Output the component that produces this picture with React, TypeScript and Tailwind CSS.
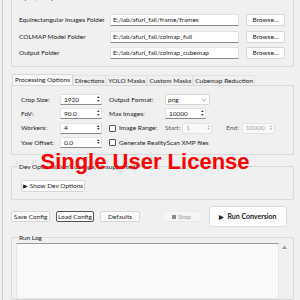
import React from 'react';

const font = { fontFamily: 'Lato, "Liberation Sans", Arial, sans-serif' };

const TextField = ({ value, className = '' }: { value: string; className?: string }) => (
  <div className={`h-[12px] bg-white border border-[#e1e1e1] border-b-[#8a8a8a] rounded-[1px] px-[2px] flex items-center text-[6.5px] text-[#1a1a1a] whitespace-nowrap overflow-hidden ${className}`}>
    {value}
  </div>
);

const Btn = ({ children, className = '' }: { children: React.ReactNode; className?: string }) => (
  <div className={`h-[12px] bg-[#fdfdfd] border border-[#d6d6d6] rounded-[2px] flex items-center justify-center text-[6.5px] text-[#1a1a1a] whitespace-nowrap ${className}`}>
    {children}
  </div>
);

const SpinBox = ({ value, disabled = false, className = '' }: { value: string; disabled?: boolean; className?: string }) => (
  <div className={className}>
    <div className={`h-[11px] border border-[#e3e3e3] ${disabled ? 'bg-[#f9f9f9] text-[#a0a0a0]' : 'bg-white border-b-[#8a8a8a] text-[#1a1a1a]'} rounded-[1px] pl-[3px] pr-[1px] flex items-center justify-between text-[6.5px]`}>
      <span>{value}</span>
      <span className={`flex flex-col items-center leading-none text-[3.5px] ${disabled ? 'text-[#b0b0b0]' : 'text-[#222]'}`}>
        <span>▲</span>
        <span>▼</span>
      </span>
    </div>
  </div>
);

const Check = ({ label }: { label: string }) => (
  <div className="flex items-center gap-[3px] text-[6.5px] text-[#1a1a1a] whitespace-nowrap">
    <div className="w-[7px] h-[7px] border border-[#555] bg-white rounded-[1px]" />
    <span>{label}</span>
  </div>
);

const Group = ({ title, className = '', children }: { title: string; className?: string; children?: React.ReactNode }) => (
  <div className={`relative border border-[#d9d9d9] rounded-[2px] ${className}`}>
    <div className="absolute -top-[5px] left-[6px] bg-[#f0f0f0] px-[1px] text-[6.5px] leading-[9px] text-[#1a1a1a] whitespace-nowrap">{title}</div>
    {children}
  </div>
);

const tabs = ['Processing Options', 'Directions', 'YOLO Masks', 'Custom Masks', 'Cubemap Reduction'];

export default function App() {
  const folders = [
    ['Equirectangular Images Folder', 'E:/lab/afuri_fall/frame/frames'],
    ['COLMAP Model Folder', 'E:/lab/afuri_fall/colmap_full'],
    ['Output Folder', 'E:/lab/afuri_fall/colmap_cubemap'],
  ];

  return (
    <div className="w-[300px] h-[300px] bg-[#f0f0f0] overflow-hidden relative" style={font}>
      <div className="ml-[2px] h-full border-l border-[#c8c8c8] pl-[8px] pr-[6px] flex flex-col">
        {/* Input / Output */}
        <Group title="Input / Output" className="-mt-[3px] h-[70px] shrink-0 pt-[16px] pl-[7px] pr-[7px] flex flex-col gap-[4.5px]">
          {folders.map(([label, value]) => (
            <div key={label} className="flex items-center h-[12px]">
              <span className="w-[91px] text-[6.5px] text-[#1a1a1a] whitespace-nowrap">{label}</span>
              <TextField value={value} className="w-[129px]" />
              <Btn className="ml-[7px] w-[39px]">Browse...</Btn>
            </div>
          ))}
        </Group>

        {/* Tabs */}
        <div className="mt-[7px] flex items-end h-[11px] shrink-0 pl-[1px]">
          {tabs.map((t, i) => (
            <div
              key={t}
              className={`px-[1px] text-[6.5px] text-[#1a1a1a] whitespace-nowrap flex items-center border border-b-0 ${i === 0 ? 'h-[11px] px-[2px] bg-[#f9f9f9] border-[#d9d9d9]' : 'h-[10px] bg-[#f0f0f0] border-[#e3e3e3]'}`}
            >
              {t}
            </div>
          ))}
        </div>
        <div className="h-[70px] shrink-0 border border-[#d9d9d9] bg-[#f0f0f0] pt-[8px] pl-[9px] flex flex-col gap-[3.3px] text-[6.5px] text-[#1a1a1a] whitespace-nowrap">
          <div className="flex items-center h-[11px]">
            <span className="w-[39px]">Crop Size:</span>
            <SpinBox value="1920" className="w-[42px]" />
            <span className="ml-[7px] w-[56px]">Output Format:</span>
            <div className="h-[11px] w-[45px] bg-white border border-[#d6d6d6] rounded-[2px] px-[2px] flex items-center justify-between">
              <span>png</span>
              <svg width="6" height="4" viewBox="0 0 6 4"><path d="M0.5 0.8 L3 3.2 L5.5 0.8" fill="none" stroke="#777" strokeWidth="0.6" /></svg>
            </div>
          </div>
          <div className="flex items-center h-[11px]">
            <span className="w-[39px]">FoV:</span>
            <SpinBox value="90.0" className="w-[42px]" />
            <span className="ml-[7px] w-[56px]">Max Images:</span>
            <SpinBox value="10000" className="w-[41px]" />
          </div>
          <div className="flex items-center h-[11px]">
            <span className="w-[39px]">Workers:</span>
            <SpinBox value="4" className="w-[42px]" />
            <div className="ml-[7px] w-[56px]"><Check label="Image Range:" /></div>
            <span className="text-[#555]">Start:</span>
            <SpinBox value="1" disabled className="ml-[2px] w-[30px]" />
            <span className="ml-[14px] text-[#555]">End:</span>
            <SpinBox value="10000" disabled className="ml-[3px] w-[33px]" />
          </div>
          <div className="flex items-center h-[11px]">
            <span className="w-[39px]">Yaw Offset:</span>
            <SpinBox value="0.0" className="w-[42px]" />
            <div className="ml-[7px]"><Check label="Generate RealityScan XMP files" /></div>
          </div>
        </div>

        {/* Dev options */}
        <Group title="Dev Options(Don't change, Unsupported)" className="mt-[11px] h-[34px] shrink-0 pt-[13px] pl-[9px]">
          <Btn className="w-[64px] gap-[2px]">
            <span className="text-[5.5px]">▶</span> Show Dev Options
          </Btn>
        </Group>

        {/* Buttons */}
        <div className="mt-[6px] h-[21px] shrink-0 flex items-center">
          <Btn className="w-[39px] !h-[11px]">Save Config</Btn>
          <Btn className="ml-[6px] w-[38px] !h-[11px] !border-[#555]">Load Config</Btn>
          <Btn className="ml-[6px] w-[40px] !h-[11px]">Defaults</Btn>
          <div className="ml-[22px] w-[39px] h-[11px] bg-[#f5f5f5] border border-[#ebebeb] rounded-[2px] flex items-center justify-center gap-[2px] text-[6.5px] text-[#9a9a9a]">
            <span className="w-[4px] h-[4px] bg-[#8a8a8a]" />Stop
          </div>
          <div className="ml-[8px] w-[78px] h-[21px] bg-white border border-[#dcdcdc] rounded-[3px] flex items-center justify-center gap-[3px] text-[7px] font-bold text-[#1a1a1a] whitespace-nowrap">
            <span className="text-[6px]">▶</span>Run Conversion
          </div>
        </div>

        {/* Run log */}
        <Group title="Run Log" className="mt-[10px] flex-1 pt-[5px] pl-[4px] pr-[3px] flex">
          <div className="flex-1 bg-[#f9f9f9] border border-[#e5e5e5] border-t-[#9a9a9a] border-t-[1.5px]" />
          <div className="w-[11px] flex justify-center pt-[2px]">
            <svg width="5" height="4" viewBox="0 0 5 4"><path d="M0 4 L2.5 0.5 L5 4 Z" fill="#999" /></svg>
          </div>
        </Group>
      </div>

      {/* Watermark */}
      <div className="absolute left-0 right-[10px] top-[151px] text-center text-[22px] font-bold text-[#ff0000] leading-none" style={{ fontFamily: '"Liberation Sans", Arial, sans-serif' }}>
        Single User License
      </div>
    </div>
  );
}
